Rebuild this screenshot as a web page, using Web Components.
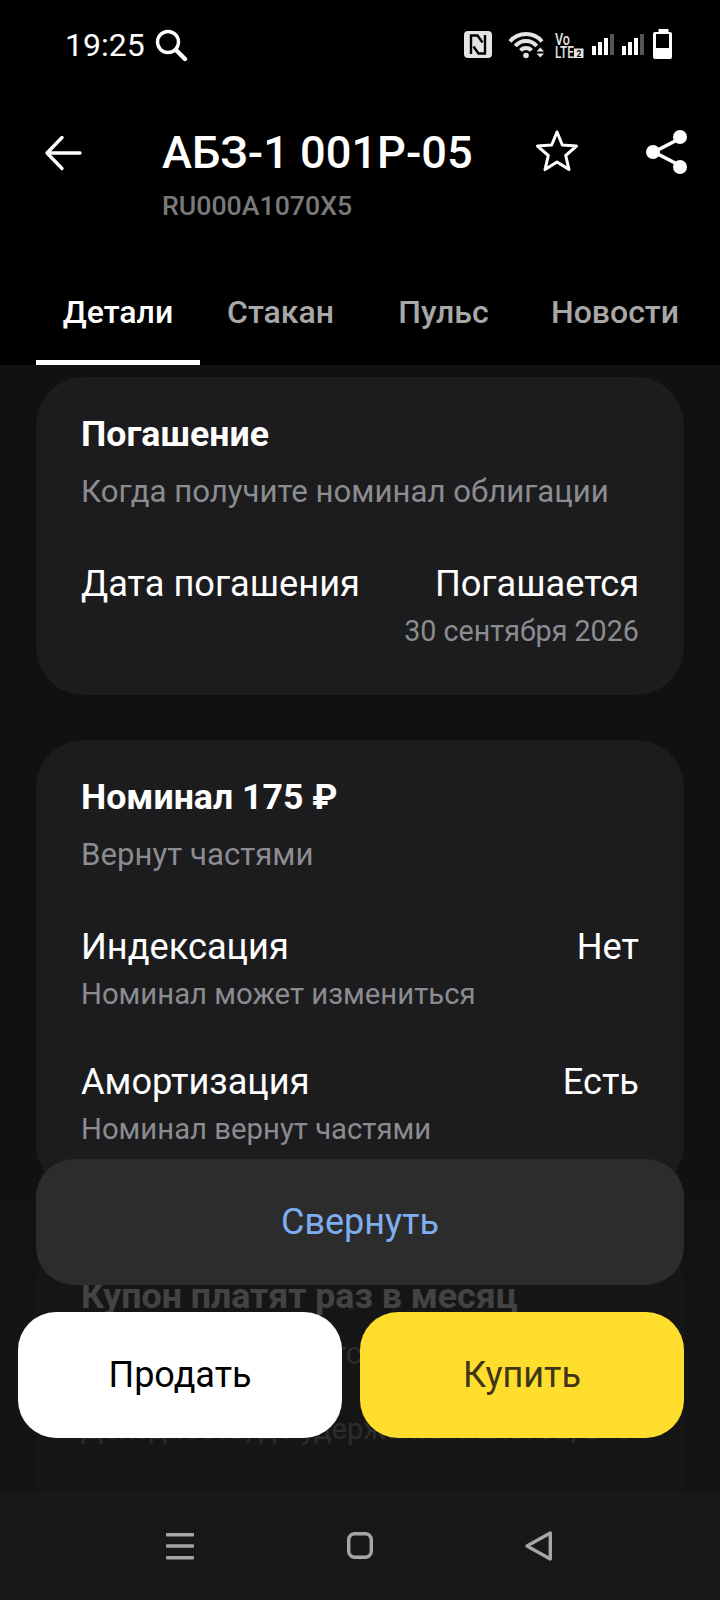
<!DOCTYPE html>
<html><head><meta charset="utf-8">
<style>
html,body{margin:0;padding:0;background:#000}
body{width:720px;height:1600px;overflow:hidden;font-family:Roboto,"Noto Sans",sans-serif;color:#fff}
</style></head><body>
<app-screen>
  <status-bar></status-bar>
  <top-header title-text="АБЗ-1 001Р-05" sub="RU000A1070X5"></top-header>
  <tab-bar></tab-bar>
  <main-area>
    <info-card heading="Погашение" note="Когда получите номинал облигации">
      <info-row label="Дата погашения" value="Погашается" value-note="30 сентября 2026"></info-row>
    </info-card>
    <info-card heading="Номинал 175 ₽" note="Вернут частями">
      <info-row label="Индексация" label-note="Номинал может измениться" value="Нет"></info-row>
      <info-row label="Амортизация" label-note="Номинал вернут частями" value="Есть"></info-row>
    </info-card>
    <info-card style="margin-top:1px;min-height:400px;--rows-top:37px" heading="Купон платят раз в месяц" note="Размер не меняется">
      <info-row label-note="Доходность, до удержания налогов, в %"></info-row>
    </info-card>
  </main-area>
  <nav-bar></nav-bar>
</app-screen>
<script>
function def(name, css, html){
  customElements.define(name, class extends HTMLElement{
    constructor(){super();this.attachShadow({mode:'open'});}
    connectedCallback(){
      const a=n=>this.getAttribute(n)||'';
      this.shadowRoot.innerHTML='<style>'+css+'</style>'+(typeof html==='function'?html(a):html);
    }
  });
}
def('app-screen',':host{display:flex;flex-direction:column;width:720px;height:1600px;position:relative;overflow:hidden}','<slot></slot>');
def('status-bar',`:host{display:flex;align-items:center;height:90px;padding:0 24px 0 65px;box-sizing:border-box;color:#fff;flex:none}
.t{font-size:32px;line-height:88px}
svg{display:block}
.s{margin-left:9px}.r{margin-left:auto;display:flex;align-items:center}`,
`<span class="t">19:25</span>
<svg class="s" width="34" height="34" viewBox="0 0 34 34" fill="none" stroke="#fff"><circle cx="14" cy="14" r="10.5" stroke-width="3.4"/><path d="M22 22l9 9" stroke-width="4.4" stroke-linecap="round"/></svg>
<div class="r">
<svg width="232" height="40" viewBox="0 0 232 40">
<rect x="0" y="6" width="28" height="27" rx="4" fill="#e4e4e4"/>
<path d="M7 29V10.500h6.500l5 7M21 10v18.500h-6.500l-5-7" fill="none" stroke="#000" stroke-width="2.400"/>
<path d="M46 16.500A21 21 0 0 1 78 16.500M51.300 21A14 14 0 0 1 72.700 21M56.600 25.500A7 7 0 0 1 67.400 25.500" fill="none" stroke="#e4e4e4" stroke-width="4"/>
<circle cx="62" cy="30.500" r="2.800" fill="#e4e4e4"/>
<path d="M72.500 26.500l3.800-4 3.800 4zM72.500 28.500h7.600l-3.800 4z" fill="#e4e4e4"/>
<text x="91" y="20" font-family="Roboto" font-size="16" font-weight="500" fill="#e4e4e4" textLength="15" lengthAdjust="spacingAndGlyphs">Vo</text>
<text x="91" y="33" font-family="Roboto" font-size="16" font-weight="500" fill="#e4e4e4" textLength="19" lengthAdjust="spacingAndGlyphs">LTE</text>
<rect x="110" y="23.500" width="9.500" height="9.500" fill="#e4e4e4"/>
<text x="112.500" y="31.800" font-family="Roboto" font-size="8.500" font-weight="700" fill="#000">2</text>
<rect x="128" y="21" width="4" height="9" fill="#fff"/><rect x="134" y="17" width="4" height="13" fill="#fff"/><rect x="140" y="13" width="4" height="17" fill="#fff"/><rect x="146" y="9" width="4" height="21" fill="#555"/>
<rect x="158" y="21" width="4" height="9" fill="#fff"/><rect x="164" y="17" width="4" height="13" fill="#fff"/><rect x="170" y="13" width="4" height="17" fill="#fff"/><rect x="176" y="9" width="4" height="21" fill="#555"/>
<path d="M189 9a2 2 0 0 1 2-2h3.500V4h10v3h1.500a2 2 0 0 1 2 2v23a2 2 0 0 1-2 2h-15a2 2 0 0 1-2-2z" fill="#fff"/>
<rect x="192" y="9" width="13" height="14" fill="#000"/>
</svg></div>`);
def('top-header',`:host{display:flex;align-items:flex-start;height:180px;padding:35px 30px 0 43px;box-sizing:border-box;flex:none}
.b{margin-right:77px;margin-top:8px;flex:none}.m{flex:1;margin-top:3px}
.h{font-size:45.2px;font-weight:500;line-height:50px}
.u{font-size:26.7px;font-weight:500;color:#7a7a7a;line-height:32px;margin-top:12px}
svg{display:block}
.st{margin:2px 64px 0 0;flex:none}.sh{margin-top:4px;flex:none}`,
a=>`<svg class="b" width="42" height="40" viewBox="0 0 42 40" fill="none" stroke="#fff" stroke-width="3.4" stroke-linecap="round" stroke-linejoin="round"><path d="M4 20h33M19 4.500L4 20l15 15.500"/></svg>
<div class="m"><div class="h">${a('title-text')}</div><div class="u">${a('sub')}</div></div>
<svg class="st" width="46" height="46" viewBox="0 0 46 46" fill="none" stroke="#fff" stroke-width="3" stroke-linejoin="round"><path d="M23 5l5.300 13 14.200 1.100-10.800 9.400 3.300 14.100L23 35l-12 7.600 3.300-14.100L3.500 19.100l14.200-1.100z"/></svg>
<svg class="sh" width="46" height="46" viewBox="0 0 46 46"><path d="M35 10L10 23l25 13" fill="none" stroke="#fff" stroke-width="3.6"/><circle cx="36" cy="8" r="7" fill="#fff"/><circle cx="9" cy="23" r="7" fill="#fff"/><circle cx="36" cy="38" r="7" fill="#fff"/></svg>`);
def('tab-bar',`:host{display:flex;height:95px;padding:0 0 0 36px;box-sizing:border-box;font-size:32px;font-weight:500;flex:none}
.t{display:flex;height:95px;box-sizing:border-box;align-items:center;padding-bottom:12px;justify-content:center;color:#a8a8a8}
.a{color:#fff;border-bottom:5px solid #fff;padding-bottom:7px}`,
`<div class="t a" style="width:164px">Детали</div><div class="t" style="width:161px">Стакан</div><div class="t" style="width:165px">Пульс</div><div class="t" style="width:178px">Новости</div>`);
def('main-area',`:host{display:block;flex:1;min-height:0;background:#111;overflow:hidden;position:relative}
.c{display:flex;flex-direction:column;gap:45px;padding:12px 36px 0}
.fade{position:absolute;left:0;right:0;top:794px;bottom:0;background:linear-gradient(to bottom,rgba(20,20,20,0),rgba(20,20,20,.8) 126px,rgba(20,20,20,.8))}
.ov{position:absolute;left:0;right:0;top:794px;display:flex;flex-direction:column;gap:27px}
.col{margin:0 36px;height:126px;border-radius:38px;background:#2c2c2c;color:#7eaef2;display:flex;align-items:center;justify-content:center;font-size:36px}
.two{display:flex;gap:18px;padding:0 36px 0 18px}
.bt{flex:1;height:126px;border-radius:38px;display:flex;align-items:center;justify-content:center;font-size:36px}
.w{background:#fff;color:#000}.y{background:#ffdd2d;color:#3d3618}`,
`<div class="c"><slot></slot></div><div class="fade"></div>
<div class="ov"><div class="col">Свернуть</div><div class="two"><div class="bt w">Продать</div><div class="bt y">Купить</div></div></div>`);
def('info-card',`:host{display:block;background:#1c1c1e;border-radius:48px;padding:37px 45px 46px 45px}
.h{font-size:35.7px;font-weight:700;line-height:40px}
.n{font-size:31.2px;color:#8b8c90;line-height:40px;margin-top:18px}
.r{display:flex;flex-direction:column;gap:50px;margin-top:var(--rows-top,52px)}`,
a=>`<div class="h">${a('heading')}</div><div class="n">${a('note')}</div><div class="r"><slot></slot></div>`);
def('info-row',`:host{display:flex;justify-content:space-between;align-items:flex-start}
.l{font-size:36.2px;line-height:40px}
.s{font-size:29.3px;color:#8b8c90;line-height:36px;margin-top:9px}
.only{margin-top:0;white-space:nowrap}
.v{font-size:28.7px}
.e{text-align:right}`,
a=>`<div>${a('label')?`<div class="l">${a('label')}</div><div class="s">${a('label-note')}</div>`:`<div class="s only">${a('label-note')}</div>`}</div>
<div class="e">${a('value')?`<div class="l">${a('value')}</div>`:''}${a('value-note')?`<div class="s v">${a('value-note')}</div>`:''}</div>`);
def('nav-bar',`:host{display:block;height:108px;background:#181818;position:relative;flex:none}
svg{position:absolute;top:34px}`,
`<svg style="left:160px" width="40" height="40" viewBox="0 0 40 40" fill="#a6a6a6"><rect x="6" y="7" width="28" height="3.6" rx="1"/><rect x="6" y="18.200" width="28" height="3.6" rx="1"/><rect x="6" y="30" width="28" height="3.6" rx="1"/></svg>
<svg style="left:340px" width="40" height="40" viewBox="0 0 40 40" fill="none" stroke="#a6a6a6" stroke-width="3.4"><rect x="8.700" y="7.700" width="22.600" height="23.600" rx="6"/></svg>
<svg style="left:518px" width="40" height="40" viewBox="0 0 40 40" fill="none" stroke="#a6a6a6" stroke-width="3.4" stroke-linejoin="round"><path d="M9 20L32.300 7v26z"/></svg>`);
</script>
</body></html>
